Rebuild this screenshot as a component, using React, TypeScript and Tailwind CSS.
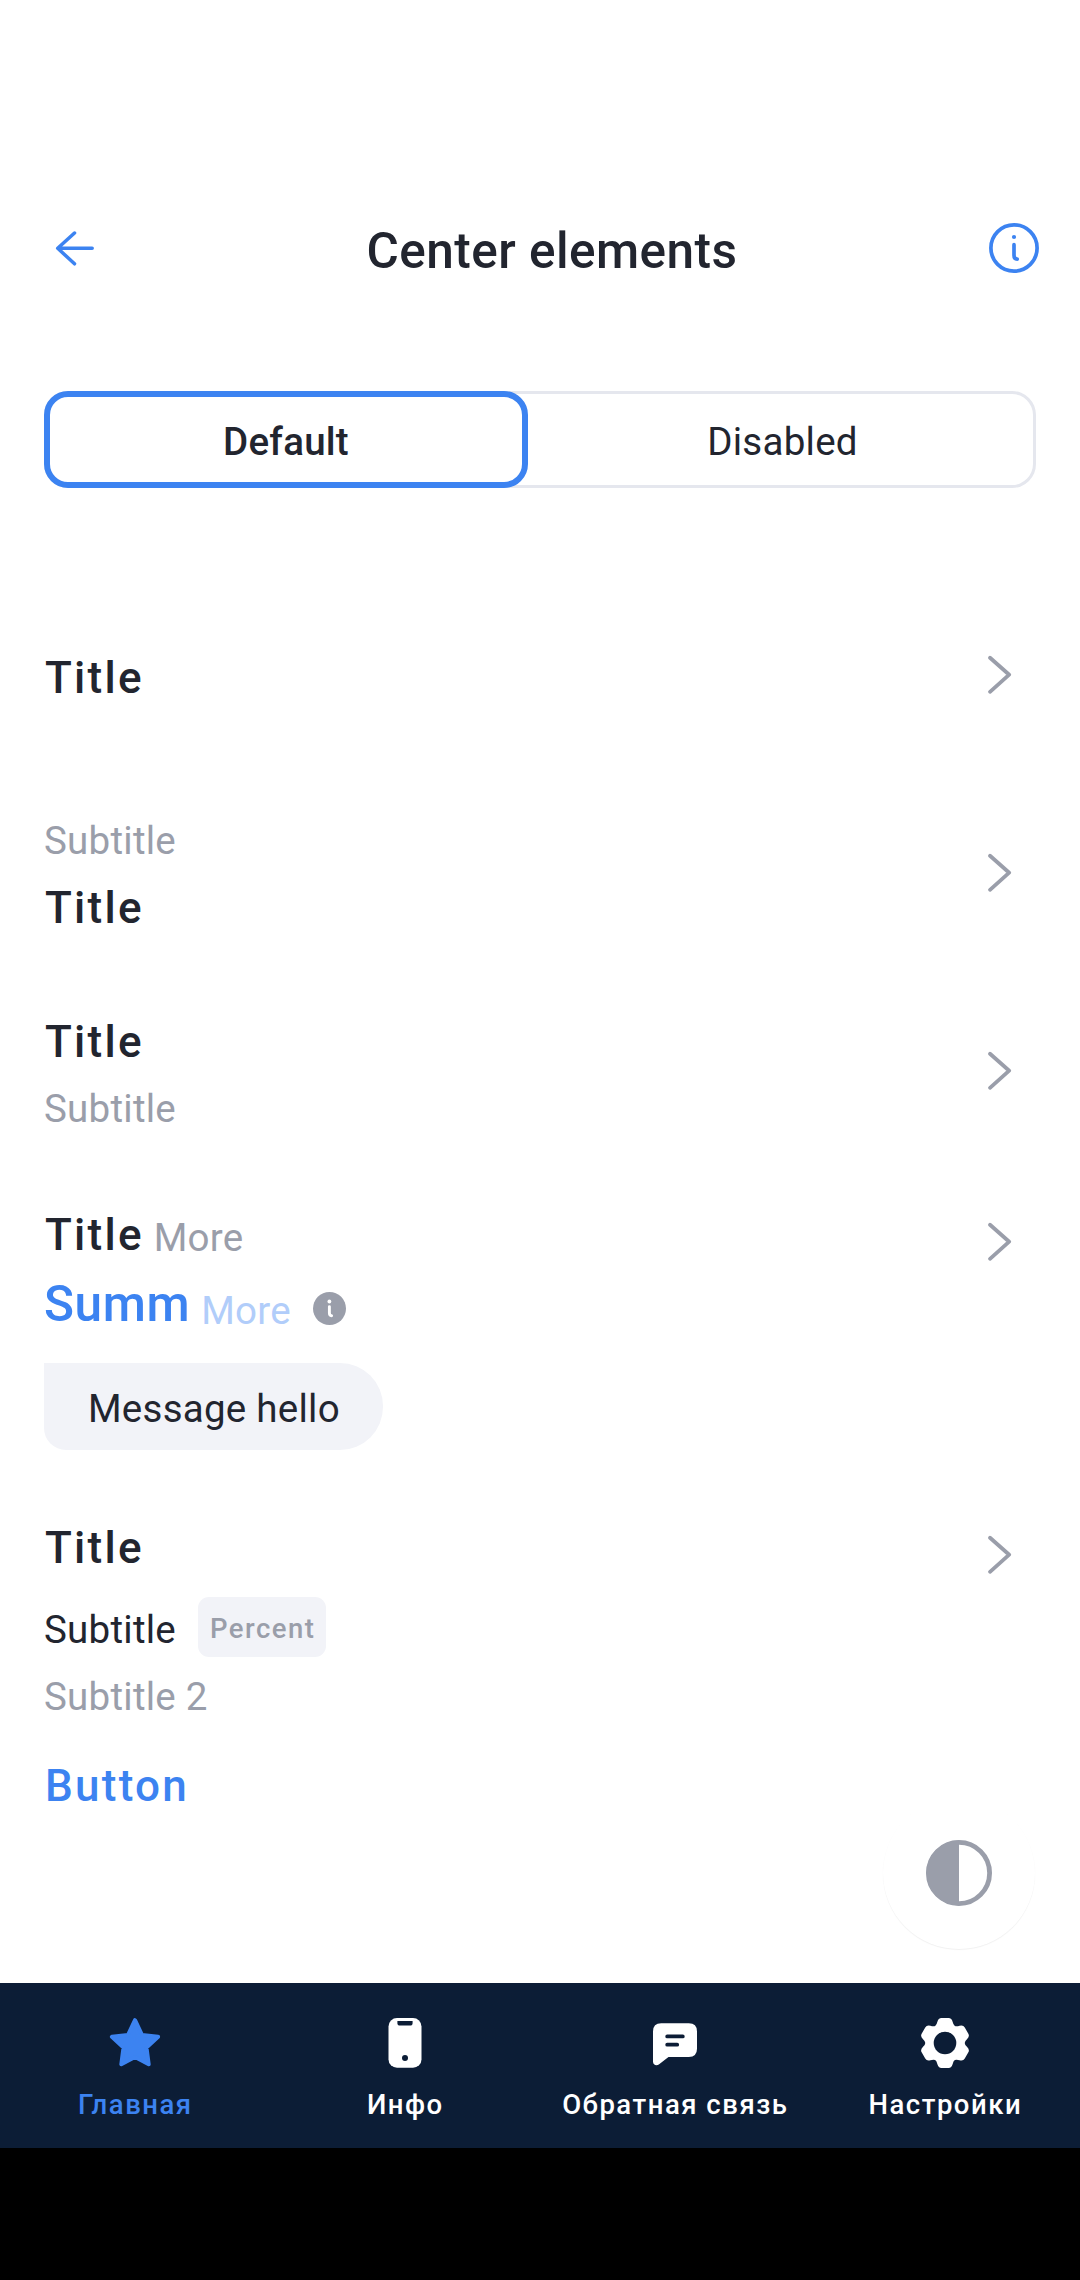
import type { ReactNode } from "react";

const TITLE = "pl-[1px] text-[44px] leading-[52px] font-medium tracking-[2.25px] text-[#22252f]";
const BODY = "text-[38.5px] leading-[45px] tracking-[0.25px]";

function rotate(x: number, y: number, deg: number) {
  const a = (deg * Math.PI) / 180;
  const px = x * Math.cos(a) - y * Math.sin(a) + 28;
  const py = x * Math.sin(a) + y * Math.cos(a) + 28;
  return `${px.toFixed(2)} ${py.toFixed(2)}`;
}

// Outline of a six-toothed gear around (28, 28).
const GEAR =
  [0, 60, 120, 180, 240, 300]
    .map((d, i) => {
      const p = (x: number, y: number) => rotate(x, y, d);
      return [
        `${i === 0 ? "M" : "L"}${p(-9.85, -17.06)}`,
        `Q${p(-8.3, -18)} ${p(-7.6, -21.2)}`,
        `Q${p(-6.6, -24.9)} ${p(-3.6, -24.9)}`,
        `L${p(3.6, -24.9)}`,
        `Q${p(6.6, -24.9)} ${p(7.6, -21.2)}`,
        `Q${p(8.3, -18)} ${p(9.85, -17.06)}`,
      ].join(" ");
    })
    .join(" ") + " Z";

function ArrowLeft() {
  return (
    <svg width="48" height="48" viewBox="0 0 48 48" fill="none" stroke="#3c83f1" strokeWidth="3.5" strokeLinecap="round" strokeLinejoin="round">
      <path d="M23.5 9 6.7 24.3 23.5 39.8M6.7 24.3H41.2" />
    </svg>
  );
}

function InfoOutline() {
  return (
    <svg width="52" height="52" viewBox="0 0 52 52" fill="none" stroke="#3c83f1" strokeWidth="3.7" strokeLinecap="round">
      <circle cx="26" cy="26" r="23.1" />
      <path d="M26 22.7V33.2Q26 37 29.2 37.1" />
      <circle cx="26" cy="15" r="2.1" fill="#3c83f1" stroke="none" />
    </svg>
  );
}

function InfoFilled() {
  return (
    <svg width="33" height="33" viewBox="0 0 33 33" fill="none">
      <circle cx="16.5" cy="16.5" r="16.5" fill="#9a9eaa" />
      <circle cx="16.4" cy="9.5" r="1.9" fill="#fff" />
      <path d="M16.4 14.6V21Q16.4 23.6 18.6 23.7" stroke="#fff" strokeWidth="2.9" strokeLinecap="round" />
    </svg>
  );
}

function Chevron() {
  return (
    <svg className="shrink-0" width="32" height="44" viewBox="0 0 32 44" fill="none" stroke="#9a9eaa" strokeWidth="3.8" strokeLinecap="round" strokeLinejoin="round">
      <path d="M6 5.8 25.2 22.7 6 39.8" />
    </svg>
  );
}

function StarIcon() {
  return (
    <svg width="56" height="56" viewBox="0 0 56 56" fill="#3c83f1" stroke="#3c83f1" strokeWidth="4" strokeLinejoin="round">
      <path d="M28 5.2 35 20 51.1 21.8 39.5 32.6 41.7 49.2 28 41.9 14.3 49.2 16.5 32.6 4.9 21.8 21 20Z" />
    </svg>
  );
}

function PhoneIcon() {
  return (
    <svg width="56" height="56" viewBox="0 0 56 56" fill="#fff">
      <rect x="11.5" y="3" width="33" height="49.7" rx="8.5" />
      <path d="M20.4 6H35.6V8Q35.6 10.6 33 10.6H23Q20.4 10.6 20.4 8Z" fill="#0c1d36" />
      <circle cx="28" cy="43" r="3" fill="#0c1d36" />
    </svg>
  );
}

function ChatIcon() {
  return (
    <svg width="56" height="56" viewBox="0 0 56 56">
      <path fill="#fff" d="M6 16.5Q6 8.3 14.2 8.3H41.8Q50 8.3 50 16.5V33.8Q50 42 41.8 42H21.5L11.8 49.4C9.5 51.1 6 50 6 46.4Z" />
      <path d="M20.2 21.4H35.8M20.2 29.7H30.2" stroke="#0c1d36" strokeWidth="3.8" strokeLinecap="round" />
    </svg>
  );
}

function GearIcon() {
  return (
    <svg width="56" height="56" viewBox="0 0 56 56">
      <path d={GEAR} fill="#fff" />
      <circle cx="28" cy="28" r="11.3" fill="#0c1d36" />
    </svg>
  );
}

function Row({ className, chevron = "items-center", children }: { className: string; chevron?: string; children: ReactNode }) {
  return (
    <div className={`flex justify-between pl-[44px] pr-[64px] ${chevron}`}>
      <div className={`self-start ${className}`}>{children}</div>
      <Chevron />
    </div>
  );
}

function Tab({ icon, label, active }: { icon: ReactNode; label: string; active?: boolean }) {
  return (
    <div className="flex flex-col items-center pt-8">
      {icon}
      <span className={`mt-[18px] whitespace-nowrap pl-[0.6px] text-[27.5px] leading-8 font-medium tracking-[1.52px] ${active ? "text-[#3c83f1]" : "text-white"}`}>
        {label}
      </span>
    </div>
  );
}

export default function App() {
  return (
    <div className="relative flex h-[2280px] w-[1080px] flex-col overflow-hidden bg-black font-[Roboto,sans-serif] text-[#22252f]">
      <main className="h-[1983px] shrink-0 bg-white pt-[193px]">
        <header className="flex h-[110px] items-center pl-[51px] pr-[40px]">
          <ArrowLeft />
          <h1 className="mt-[6px] ml-[17px] flex-1 text-center text-[49.5px] leading-[58px] font-medium tracking-[0.47px]">Center elements</h1>
          <InfoOutline />
        </header>

        <div className="mx-[44px] mt-[88px] flex h-[97px] rounded-[24px] shadow-[inset_0_0_0_3px_#e5e7ee]">
          <button className={`w-[484px] rounded-[24px] border-6 border-[#3c83f1] bg-white font-medium ${BODY}`}>
            <span className="mt-[4px] block">Default</span>
          </button>
          <button className={`flex-1 pl-px ${BODY}`}>
            <span className="mt-[4px] block">Disabled</span>
          </button>
        </div>

        <section className="mt-[87px]">
          <Row className="h-[198px] pt-[77px]">
            <p className={TITLE}>Title</p>
          </Row>
          <Row className="h-[198px] pt-[45px]">
            <p className={`${BODY} text-[#9a9eaa]`}>Subtitle</p>
            <p className={`mt-[19px] ${TITLE}`}>Title</p>
          </Row>
          <Row className="h-[198px] pt-[45px]">
            <p className={TITLE}>Title</p>
            <p className={`mt-[18px] ${BODY} text-[#9a9eaa]`}>Subtitle</p>
          </Row>
          <Row className="h-[312px] pt-[40px]" chevron="items-start [&>svg]:mt-[50px]">
            <div className="flex h-[52px] gap-[10px]">
              <p className={TITLE}>Title</p>
              <p className={`mt-[6px] ${BODY} text-[#9a9eaa]`}>More</p>
            </div>
            <div className="mt-[14px] flex h-[58px]">
              <p className="text-[49.5px] leading-[58px] font-medium tracking-[0.6px] text-[#3c83f1]">Summ</p>
              <p className={`mt-[13px] ml-[11px] mr-[22px] ${BODY} text-[#b1cdfa]`}>More</p>
              <span className="mt-[17px]">
                <InfoFilled />
              </span>
            </div>
            <div className="mt-[30px] h-[87px] w-[339px] rounded-r-[43px] rounded-bl-[22px] bg-[#f2f3f8] pt-[23px] pl-[44px]">
              <p className={`whitespace-nowrap ${BODY}`}>Message hello</p>
            </div>
          </Row>
          <Row className="pt-[41px]" chevron="items-start [&>svg]:mt-[51px]">
            <p className={TITLE}>Title</p>
            <div className="mt-[23px] flex h-[60px] gap-[22px]">
              <p className={`mt-[10px] ${BODY}`}>Subtitle</p>
              <span className="h-[60px] w-[128px] rounded-[11px] bg-[#f2f3f8] pt-[16px] pl-[12px] text-[27.5px] leading-8 font-medium tracking-[1.45px] text-[#9a9eaa]">
                Percent
              </span>
            </div>
            <p className={`mt-[17px] ${BODY} text-[#9a9eaa]`}>Subtitle 2</p>
            <button className="mt-[41px] block pl-[1px] text-[44px] leading-[52px] font-medium tracking-[2.25px] text-[#3c83f1]">Button</button>
          </Row>
        </section>
      </main>

      <button className="absolute top-[1797px] left-[883px] flex size-[152px] items-center justify-center rounded-full bg-white shadow-[0_1px_1px_rgba(0,0,0,0.06)]">
        <svg width="66" height="66" viewBox="0 0 66 66">
          <circle cx="33" cy="33" r="30.6" fill="none" stroke="#9a9eaa" strokeWidth="4.8" />
          <path d="M33 0.5A32.5 32.5 0 0 0 33 65.5Z" fill="#9a9eaa" />
        </svg>
      </button>

      <nav className="grid h-[165px] shrink-0 grid-cols-4 bg-[#0c1d36]">
        <Tab icon={<StarIcon />} label="Главная" active />
        <Tab icon={<PhoneIcon />} label="Инфо" />
        <Tab icon={<ChatIcon />} label="Обратная связь" />
        <Tab icon={<GearIcon />} label="Настройки" />
      </nav>
    </div>
  );
}
